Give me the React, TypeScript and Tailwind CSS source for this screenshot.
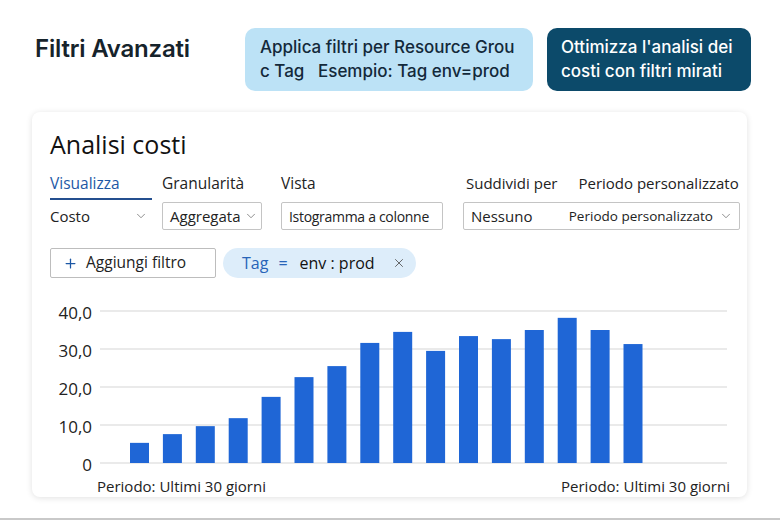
import { ChevronDown, Plus, X } from 'lucide-react';

const costs = [5.3, 7.6, 9.7, 11.8, 17.4, 22.6, 25.5, 31.6, 34.5, 29.5, 33.4, 32.6, 35, 38.2, 35, 31.3];
const yTicks = ['40,0', '30,0', '20,0', '10,0', '0'];

function CostChart() {
  // gridlines every 38px, value 0 sits at y=169
  return (
    <svg width="627" height="172" viewBox="0 0 627 172" className="block">
      {[17, 55, 93, 131, 169].map((y) => (
        <line key={y} x1="0" x2="627" y1={y} y2={y} stroke="#e3e3e3" strokeWidth="1.5" />
      ))}
      {costs.map((v, i) => {
        const h = v * 3.8;
        return <rect key={i} x={30 + i * 32.9} y={169 - h} width="19" height={h} fill="#1f66d6" />;
      })}
    </svg>
  );
}

function Field({ label, active, children }: { label: string; active?: boolean; children: React.ReactNode }) {
  return (
    <div className="flex flex-col">
      <div className={`h-[24px] leading-[24px] text-[15.5px] whitespace-nowrap ${active ? 'text-[#1d58a5]' : 'text-[#222]'}`}>{label}</div>
      {active ? <div className="mt-[3px] h-[2px] bg-[#244f8f]" /> : <div className="h-[5px]" />}
      <div className="mt-[2px]">{children}</div>
    </div>
  );
}

export default function App() {
  return (
    <div className="h-[520px] w-[780px] bg-white border-b-2 border-[#c9c9c9] overflow-hidden" style={{ fontFamily: '"Open Sans", "Noto Sans", sans-serif' }}>
      <header className="flex items-start pt-[28px] pl-[35px]" style={{ fontFamily: 'Inter, "Noto Sans", sans-serif' }}>
        <h1 className="w-[210px] mt-[3px] text-[24px] font-semibold text-[#16232b] tracking-[-0.2px]">Filtri Avanzati</h1>
        <div className="w-[288px] h-[63px] rounded-[10px] bg-[#bce2f6] pl-[15px] pt-[7px] text-[17px] leading-[24px] font-medium text-[#13293a] whitespace-pre">
          {'Applica filtri per Resource Grou\nc Tag   Esempio: Tag env=prod'}
        </div>
        <div className="ml-[14px] w-[204px] h-[63px] rounded-[10px] bg-[#0c4a6a] pl-[14px] pt-[7px] text-[17px] leading-[24px] font-medium text-white whitespace-pre">
          {"Ottimizza l'analisi dei\ncosti con filtri mirati"}
        </div>
      </header>

      <section className="mt-[21px] ml-[32px] w-[715px] h-[385px] rounded-[8px] bg-white shadow-[0_1px_6px_rgba(0,0,0,0.12)] pl-[18px] pr-[7px] pt-[16px]">
        <h2 className="text-[25px] leading-[32px] text-[#111]">Analisi costi</h2>

        <div className="mt-[11px] flex">
          <div className="w-[102px]">
            <Field label="Visualizza" active>
              <div className="h-[28px] flex items-center justify-between text-[15px] text-[#222]">
                <span>Costo</span>
                <ChevronDown className="mr-[4px] text-[#666]" size={14} strokeWidth={1.25} />
              </div>
            </Field>
          </div>
          <div className="ml-[10px] w-[100px]">
            <Field label="Granularità">
              <div className="h-[28px] border border-[#c4c4c4] rounded-[2px] flex items-center gap-[3px] pl-[7px] text-[15px] text-[#222]">
                <span>Aggregata</span>
                <ChevronDown className="text-[#666]" size={14} strokeWidth={1.25} />
              </div>
            </Field>
          </div>
          <div className="ml-[19px] w-[162px]">
            <Field label="Vista">
              <div className="h-[28px] border border-[#c4c4c4] rounded-[2px] flex items-center pl-[7px] text-[14px] tracking-[-0.3px] text-[#222] whitespace-nowrap">
                Istogramma a colonne
              </div>
            </Field>
          </div>
          <div className="ml-[20px] w-[277px] flex flex-col">
            <div className="h-[24px] leading-[24px] text-[15px] text-[#222] flex whitespace-nowrap">
              <span className="ml-[3px]">Suddividi per</span>
              <span className="ml-[21px]">Periodo personalizzato</span>
            </div>
            <div className="h-[5px]" />
            <div className="mt-[2px] h-[28px] border border-[#c4c4c4] rounded-[2px] flex items-center pl-[7px] pr-[6px] text-[15px] text-[#222] whitespace-nowrap">
              <span>Nessuno</span>
              <span className="ml-auto text-[13.5px]">Periodo personalizzato</span>
              <ChevronDown className="ml-[6px] text-[#666]" size={14} strokeWidth={1.25} />
            </div>
          </div>
        </div>

        <div className="mt-[18px] flex items-center gap-[7px]">
          <button className="w-[166px] h-[30px] border border-[#bdbdbd] rounded-[2px] flex items-center pl-[12px] gap-[8px] text-[15.5px] text-[#222]">
            <Plus className="text-[#1d58a5]" size={15} strokeWidth={2} />
            <span>Aggiungi filtro</span>
          </button>
          <div className="w-[193px] h-[30px] rounded-full bg-[#ddedfa] flex items-center pl-[19px] text-[16px]">
            <span className="text-[#2864b8]">Tag</span>
            <span className="ml-[10px] text-[#2864b8]">=</span>
            <span className="ml-[12px] text-[#111]">env : prod</span>
            <X className="ml-[17px] text-[#555]" size={14} strokeWidth={1.5} />
          </div>
        </div>

        <div className="mt-[16px] flex gap-[8px]">
          <div className="w-[42px] flex flex-col text-right text-[17px] text-[#222]">
            {yTicks.map((t) => (
              <div key={t} className="h-[38px] flex items-center justify-end">{t}</div>
            ))}
          </div>
          <CostChart />
        </div>

        <div className="mt-[-8px] ml-[47px] mr-[10px] flex justify-between text-[15px] leading-[20px] text-[#222]">
          <span>Periodo: Ultimi 30 giorni</span>
          <span>Periodo: Ultimi 30 giorni</span>
        </div>
      </section>
    </div>
  );
}
